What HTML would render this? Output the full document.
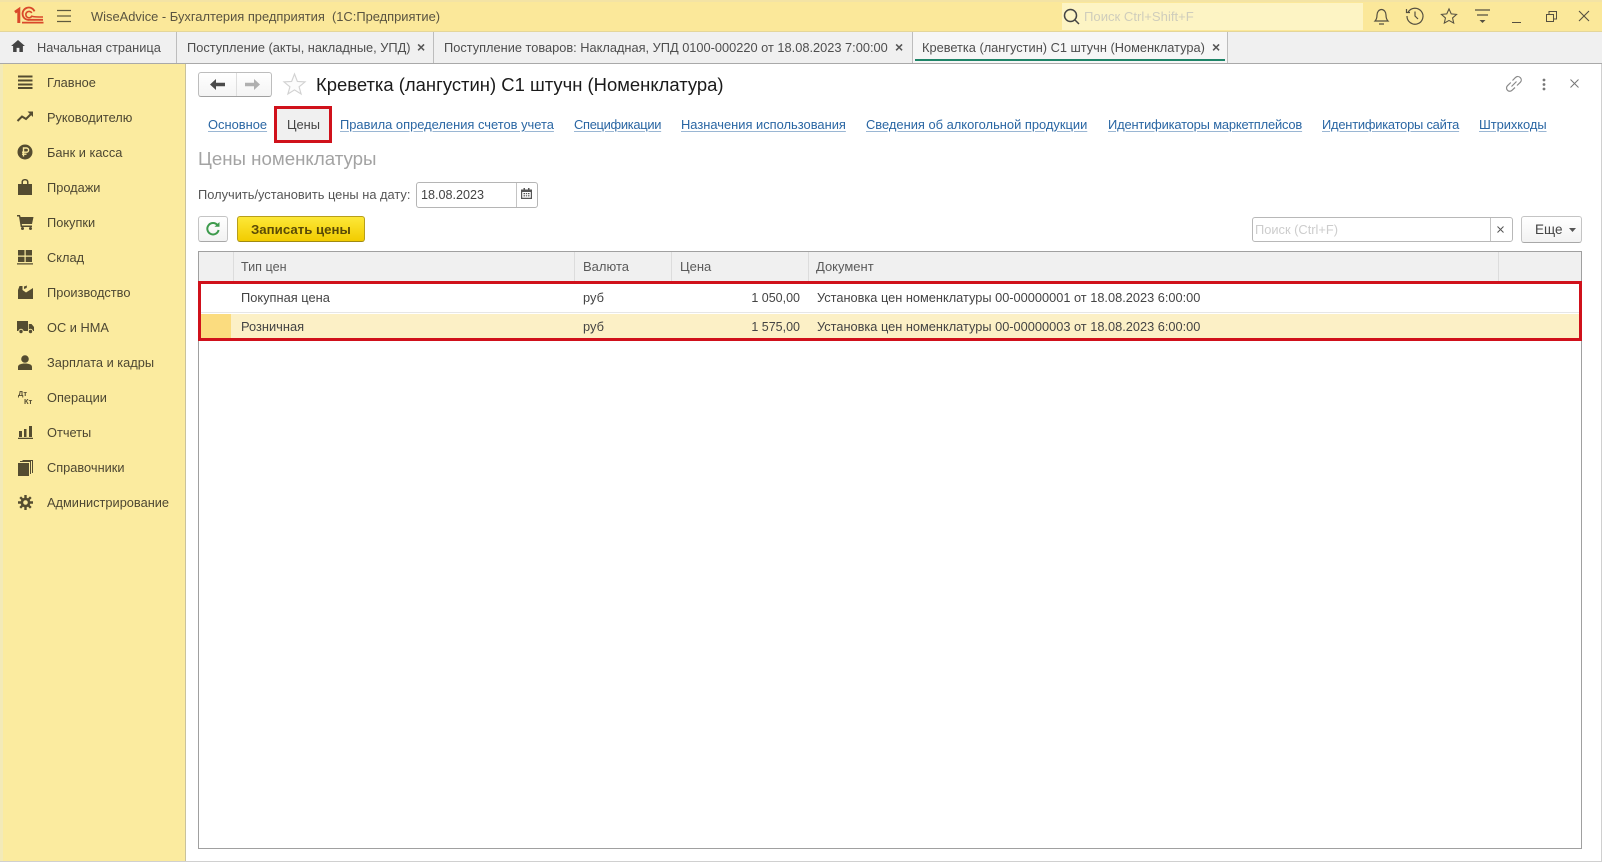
<!DOCTYPE html>
<html lang="ru"><head><meta charset="utf-8"><title>Креветка (лангустин) С1 штучн (Номенклатура)</title>
<style>
html,body{margin:0;padding:0}
body{width:1602px;height:862px;position:relative;overflow:hidden;background:#fff;font-family:"Liberation Sans",Arial,sans-serif;font-size:12.85px;color:#4a4a4a}
.a,.t{position:absolute}
.t{white-space:nowrap;line-height:16px}
svg{position:absolute;overflow:visible}
.side{color:#4d4732;left:47px;font-size:12.8px}
.l{color:#2a66a3;top:117px;font-size:12.9px;text-decoration:underline;text-decoration-color:#9ab6d3;text-underline-offset:2px}
.tab{top:40px;color:#4e4e4e;font-size:12.8px}
.x{top:39px;font-weight:bold;color:#555;font-size:14px}
.h{top:259px;color:#5a5a5a;font-size:13px}
.c{color:#444}
.sep{position:absolute;width:1px;background:#dcdcdc;top:252px;height:29px}
</style></head><body>
<!-- top bar -->
<div class="a" style="left:0;top:0;width:1602px;height:32px;background:#fbe89a;border-top:0"></div>
<div class="a" style="left:0;top:0;width:1602px;height:2px;background:#f3e3a5"></div>
<div class="a" style="left:0;top:31px;width:1602px;height:1px;background:#e4d69a"></div>
<svg style="left:14px;top:8px" width="30" height="16" viewBox="0 0 30 16" fill="none" stroke="#d9482a">
<path d="M1 4.2L4.8 1.6V15" stroke-width="3"/>
<path d="M20.5 3.4A6.2 6.2 0 1 0 16 11.8H29" stroke-width="1.8"/>
<path d="M17.8 5A3.2 3.2 0 1 0 17.8 8.2C19.5 8.8 24 9 29 9" stroke-width="1.6"/>
<path d="M8 14.6H29.5" stroke-width="1.8"/></svg>
<svg style="left:57px;top:9px" width="15" height="14" stroke="#5f5a3e" stroke-width="1.2"><path d="M0 1.5H14M0 7H14M0 12.5H14"/></svg>
<div class="t" style="left:91px;top:9px;color:#5a5440;font-size:12.9px;white-space:pre">WiseAdvice - Бухгалтерия предприятия  (1С:Предприятие)</div>
<div class="a" style="left:1062px;top:3px;width:301px;height:27px;background:#fdf4c4"></div>
<svg style="left:1063px;top:8px" width="18" height="18" fill="none" stroke="#444" stroke-width="1.5"><circle cx="7.5" cy="7.5" r="6"/><path d="M12 12L16 16"/></svg>
<div class="t" style="left:1084px;top:9px;color:#cfcdbc;font-size:13.1px">Поиск Ctrl+Shift+F</div>
<svg style="left:1372px;top:7px" width="20" height="20" fill="none" stroke="#555040" stroke-width="1.2"><path d="M3 14C5 12 5 10 5 8 5 5 7 2.5 9.5 2.5S14 5 14 8C14 10 14 12 16 14ZM7 17H12"/></svg>
<svg style="left:1405px;top:6px" width="20" height="20" fill="none" stroke="#555040" stroke-width="1.2"><path d="M3.2 6A8 8 0 1 1 2 10M1.5 3V6.5H5M10 5.5V10L13 13"/></svg>
<svg style="left:1440px;top:8px" width="18" height="16" viewBox="0 0 19 18" fill="none" stroke="#555040" stroke-width="1.2"><path d="M9.5 1L12 6.6 18 7.2 13.5 11.2 14.8 17 9.5 14 4.2 17 5.5 11.2 1 7.2 7 6.6Z"/></svg>
<svg style="left:1475px;top:9px" width="16" height="15" stroke="#555040" stroke-width="1.2"><path d="M0 1H15M2 6H13"/><path d="M4.5 11H10.5L7.5 14Z" fill="#555040" stroke="none"/></svg>
<div class="a" style="left:1512px;top:22px;width:9px;height:1px;background:#555040"></div>
<svg style="left:1546px;top:11px" width="11" height="11" fill="none" stroke="#555040"><path d="M.5 3.5H7.5V10.5H.5ZM3 3V.5H10.5V8H8"/></svg>
<svg style="left:1578px;top:10px" width="12" height="12" stroke="#555040" stroke-width="1.1"><path d="M1 1L11 11M11 1L1 11"/></svg>
<!-- tabs -->
<div class="a" style="left:0;top:32px;width:1602px;height:31px;background:#f0f0f0;border-bottom:1px solid #a9a9a9"></div>
<div class="a" style="left:176px;top:32px;width:1px;height:31px;background:#bdbdbd"></div>
<div class="a" style="left:433px;top:32px;width:1px;height:31px;background:#bdbdbd"></div>
<div class="a" style="left:912px;top:32px;width:316px;height:31px;background:#f6f6f6;border-left:1px solid #bdbdbd;border-right:1px solid #bdbdbd;box-sizing:border-box"></div>
<div class="a" style="left:915px;top:59px;width:310px;height:2px;background:#1f8468"></div>
<svg style="left:11px;top:40px" width="14" height="12" viewBox="0 0 15 13" fill="#444"><path d="M7.5 0L15 6.5H12.8V13H9V8.5H6V13H2.2V6.5H0Z"/></svg>
<div class="t tab" style="left:37px">Начальная страница</div>
<div class="t tab" style="left:187px">Поступление (акты, накладные, УПД)</div><div class="t x" style="left:417px">×</div>
<div class="t tab" style="left:444px">Поступление товаров: Накладная, УПД 0100-000220 от 18.08.2023 7:00:00</div><div class="t x" style="left:895px">×</div>
<div class="t tab" style="left:922px">Креветка (лангустин) С1 штучн (Номенклатура)</div><div class="t x" style="left:1212px">×</div>
<!-- sidebar -->
<div class="a" style="left:0;top:64px;width:185px;height:797px;background:#fbeb9f;border-right:1px solid #c9c29c"></div>
<div class="a" style="left:0;top:64px;width:3px;height:797px;background:#f3eab8"></div>
<div class="a" style="left:0;top:861px;width:1602px;height:1px;background:#d0d0d0"></div>
<div class="a" style="left:1601px;top:64px;width:1px;height:798px;background:#d0d0d0"></div>
<div class="t side" style="top:75px">Главное</div>
<div class="t side" style="top:110px">Руководителю</div>
<div class="t side" style="top:145px">Банк и касса</div>
<div class="t side" style="top:180px">Продажи</div>
<div class="t side" style="top:215px">Покупки</div>
<div class="t side" style="top:250px">Склад</div>
<div class="t side" style="top:285px">Производство</div>
<div class="t side" style="top:320px">ОС и НМА</div>
<div class="t side" style="top:355px">Зарплата и кадры</div>
<div class="t side" style="top:390px">Операции</div>
<div class="t side" style="top:425px">Отчеты</div>
<div class="t side" style="top:460px">Справочники</div>
<div class="t side" style="top:495px">Администрирование</div>
<svg style="left:18px;top:75px" width="15" height="15" stroke="#544c30" stroke-width="2"><path d="M0 1.5H14.5M0 5.5H14.5M0 9.5H14.5M0 13H14.5"/></svg>
<svg style="left:17px;top:110px" width="17" height="14" fill="none" stroke="#544c30" stroke-width="2"><path d="M0.5 11L5 6.5 9 9 15 3"/><path d="M10.5 1.5H16V7Z" fill="#544c30" stroke="none"/></svg>
<svg style="left:17px;top:144px" width="16" height="16"><circle cx="8" cy="8" r="7.5" fill="#544c30"/><path d="M6.5 12.5V4H9.5A2 2 0 0 1 9.5 8.2H5M5 10.2H9.5" fill="none" stroke="#fbeb9f" stroke-width="1.4"/></svg>
<svg style="left:18px;top:179px" width="14" height="16" fill="#544c30"><path d="M0 5H3.5V3C3.5 1 5 0 7 0S10.5 1 10.5 3V5H14V16H0ZM5 5H9V3C9 2 8 1.4 7 1.4S5 2 5 3Z"/></svg>
<svg style="left:17px;top:215px" width="17" height="15" fill="#544c30"><path d="M0 0H3L3.6 2H16.5L15 9H4.8L5 10.5H15V12H3.7L2 1.5H0Z"/><circle cx="5.5" cy="13.5" r="1.5"/><circle cx="13.5" cy="13.5" r="1.5"/></svg>
<svg style="left:17px;top:250px" width="16" height="15" fill="#544c30"><path d="M1 0H7.5V5.5H1ZM8.7 0H15V5.5H8.7ZM1 6.7H7.5V12H1ZM8.7 6.7H15V12H8.7ZM0 13.2H16V14.5H0Z"/></svg>
<svg style="left:18px;top:285px" width="15" height="15" fill="#544c30"><path d="M0 14V5L1.5 1H4.5L4.5 5 8 7.5 15 3V14Z"/><path d="M6 1.5L9 .5 8.6 3 6 4Z"/></svg>
<svg style="left:17px;top:321px" width="17" height="13" fill="#544c30"><path d="M0 0H11V10H0ZM11.8 3H14.5L17 6V10H11.8Z"/><circle cx="4" cy="10.5" r="2.2" stroke="#fbeb9f"/><circle cx="13.5" cy="10.5" r="2.2" stroke="#fbeb9f"/></svg>
<svg style="left:18px;top:355px" width="14" height="15" fill="#544c30"><circle cx="7" cy="4" r="3.8"/><path d="M0 15V12C0 9.5 3 8.5 7 8.5S14 9.5 14 12V15Z"/></svg>
<div class="t" style="left:18px;top:390px;font-size:7.5px;font-weight:bold;color:#544c30;line-height:8px">Дт<br><span style="margin-left:6px">Кт</span></div>
<svg style="left:18px;top:426px" width="15" height="13" fill="#544c30"><path d="M1 5H4V11H1ZM6 3H8.5V11H6ZM11 0H14V11H11ZM0 11.7H15V13H0Z"/></svg>
<svg style="left:18px;top:460px" width="15" height="16"><path d="M0 3H11V16H0Z" fill="#544c30"/><path d="M2 1.5H12.5V14M4.5 .5H14.5V13" fill="none" stroke="#544c30"/></svg>
<svg style="left:18px;top:495px" width="15" height="15" fill="none" stroke="#544c30"><circle cx="7.5" cy="7.5" r="3.6" stroke-width="2.6"/><path d="M7.5 0V3M7.5 12V15M0 7.5H3M12 7.5H15M2.2 2.2L4.3 4.3M10.7 10.7L12.8 12.8M12.8 2.2L10.7 4.3M4.3 10.7L2.2 12.8" stroke-width="2.4"/></svg>
<!-- header -->
<div class="a" style="left:198px;top:72px;width:72px;height:23px;border:1px solid #bdbdbd;border-bottom-color:#a0a0a0;border-radius:3px;background:linear-gradient(#fff,#f4f4f4)"></div>
<div class="a" style="left:236px;top:73px;width:1px;height:23px;background:#dedede"></div>
<svg style="left:210px;top:79px" width="15" height="11" fill="#4a4a4a"><path d="M0 5.5L6 0V3.8H15V7.2H6V11Z"/></svg>
<svg style="left:245px;top:79px" width="15" height="11" fill="#b0b0b0"><path d="M15 5.5L9 0V3.8H0V7.2H9V11Z"/></svg>
<svg style="left:283px;top:73px" width="23" height="22" viewBox="0 0 24 23" fill="#fcfcfc" stroke="#d2d2d2" stroke-width="1.2"><path d="M12 1L15 8.8 23 9.3 16.8 14.4 18.9 22 12 17.7 5.1 22 7.2 14.4 1 9.3 9 8.8Z"/></svg>
<div class="t" style="left:316px;top:74px;font-size:18.44px;line-height:22px;color:#1a1a1a">Креветка (лангустин) С1 штучн (Номенклатура)</div>
<svg style="left:1506px;top:76px" width="16" height="16" fill="none" stroke="#8a8a8a" stroke-width="1.2"><path d="M6.5 4.5L9.5 1.5C11 .2 13 .2 14.3 1.6 15.6 3 15.6 5 14.3 6.3L11 9.5M9 11.5L6 14.3C4.6 15.6 2.7 15.6 1.5 14.3.2 13 .2 11 1.5 9.7L4.8 6.5M5.5 10.5L10.5 5.5"/></svg>
<svg style="left:1542px;top:78px" width="4" height="13" fill="#777"><circle cx="2" cy="2" r="1.4"/><circle cx="2" cy="6.5" r="1.4"/><circle cx="2" cy="11" r="1.4"/></svg>
<svg style="left:1570px;top:79px" width="9" height="9" stroke="#777"><path d="M.5 .5L8.5 8.5M8.5 .5L.5 8.5"/></svg>
<!-- link bar -->
<div class="a" style="left:274px;top:106px;width:58px;height:37px;box-sizing:border-box;border:3px solid #d0111b;background:#f0f0f0"></div>
<div class="t l" style="left:208px">Основное</div>
<div class="t" style="left:287px;top:117px;color:#444">Цены</div>
<div class="t l" style="left:340px">Правила определения счетов учета</div>
<div class="t l" style="left:574px;letter-spacing:-.3px">Спецификации</div>
<div class="t l" style="left:681px">Назначения использования</div>
<div class="t l" style="left:866px">Сведения об алкогольной продукции</div>
<div class="t l" style="left:1108px;letter-spacing:-.17px">Идентификаторы маркетплейсов</div>
<div class="t l" style="left:1322px;letter-spacing:-.22px">Идентификаторы сайта</div>
<div class="t l" style="left:1479px;letter-spacing:-.05px">Штрихкоды</div>
<div class="t" style="left:198px;top:148px;font-size:18.7px;line-height:22px;color:#a3a3a3">Цены номенклатуры</div>
<div class="t" style="left:198px;top:187px;color:#555">Получить/установить цены на дату:</div>
<div class="a" style="left:416px;top:182px;width:120px;height:24px;border:1px solid #b5b5b5;border-radius:3px;background:#fff"></div>
<div class="a" style="left:516px;top:183px;width:1px;height:24px;background:#c4c4c4"></div>
<div class="t" style="left:421px;top:187px;color:#444;font-size:12.6px">18.08.2023</div>
<svg style="left:521px;top:188px" width="11" height="11" fill="#555"><path d="M0 1.5H11V11H0ZM1.2 4V9.8H9.8V4Z"/><path d="M2.5 5H4V6.2H2.5ZM4.8 5H6.2V6.2H4.8ZM7 5H8.5V6.2H7ZM2.5 7.2H4V8.4H2.5ZM4.8 7.2H6.2V8.4H4.8ZM7 7.2H8.5V8.4H7Z"/><path d="M2.5 0H4V2H2.5ZM7 0H8.5V2H7Z"/></svg>
<!-- toolbar -->
<div class="a" style="left:198px;top:216px;width:28px;height:24px;border:1px solid #c4c4c4;border-bottom-color:#a8a8a8;border-radius:3px;background:linear-gradient(#fff,#f2f2f2)"></div>
<svg style="left:206px;top:222px" width="14" height="14" fill="none" stroke="#3d9a4c" stroke-width="2"><path d="M11.5 3.2A5.7 5.7 0 1 0 12.6 8"/><path d="M8.5 4.8H13.5V0Z" fill="#3d9a4c" stroke="none"/></svg>
<div class="a" style="left:237px;top:216px;width:126px;height:24px;border:1px solid #b89f1a;border-bottom-color:#a08a10;border-radius:3px;background:linear-gradient(#fde838,#f2cc00)"></div>
<div class="t" style="left:251px;top:222px;font-weight:bold;color:#5a4a06;font-size:13.25px">Записать цены</div>
<div class="a" style="left:1252px;top:217px;width:259px;height:23px;border:1px solid #b8b8b8;border-radius:3px;background:#fff"></div>
<div class="a" style="left:1490px;top:218px;width:1px;height:23px;background:#c4c4c4"></div>
<div class="t" style="left:1255px;top:222px;color:#cdcdcd">Поиск (Ctrl+F)</div>
<svg style="left:1497px;top:226px" width="7" height="7" stroke="#555"><path d="M.5 .5L6.5 6.5M6.5 .5L.5 6.5"/></svg>
<div class="a" style="left:1521px;top:216px;width:59px;height:25px;border:1px solid #c4c4c4;border-bottom-color:#a8a8a8;border-radius:3px;background:linear-gradient(#fff,#f2f2f2)"></div>
<div class="t" style="left:1535px;top:222px;color:#444;font-size:13.5px">Еще</div>
<svg style="left:1569px;top:228px" width="7" height="4" fill="#555"><path d="M0 0H7L3.5 4Z"/></svg>
<!-- table -->
<div class="a" style="left:198px;top:251px;width:1382px;height:596px;border:1px solid #a0a0a0;background:#fff"></div>
<div class="a" style="left:199px;top:252px;width:1382px;height:29px;background:#f0f0f0"></div>
<div class="sep" style="left:233px"></div><div class="sep" style="left:574px"></div><div class="sep" style="left:671px"></div><div class="sep" style="left:808px"></div><div class="sep" style="left:1498px"></div>
<div class="t h" style="left:241px;font-size:12.6px">Тип цен</div>
<div class="t h" style="left:583px">Валюта</div>
<div class="t h" style="left:680px">Цена</div>
<div class="t h" style="left:816px">Документ</div>
<div class="a" style="left:199px;top:312px;width:1380px;height:1px;background:#e6e6e6"></div>
<div class="a" style="left:200px;top:314px;width:1379px;height:24px;background:#fcf0c6"></div>
<div class="a" style="left:200px;top:314px;width:31px;height:24px;background:#fbdc7f"></div>
<div class="t c" style="left:241px;top:290px">Покупная цена</div>
<div class="t c" style="left:583px;top:290px">руб</div>
<div class="t c" style="left:700px;top:290px;width:100px;text-align:right;font-size:12.5px">1 050,00</div>
<div class="t c" style="left:817px;top:290px;font-size:12.79px">Установка цен номенклатуры 00-00000001 от 18.08.2023 6:00:00</div>
<div class="t c" style="left:241px;top:319px">Розничная</div>
<div class="t c" style="left:583px;top:319px">руб</div>
<div class="t c" style="left:700px;top:319px;width:100px;text-align:right;font-size:12.5px">1 575,00</div>
<div class="t c" style="left:817px;top:319px;font-size:12.79px">Установка цен номенклатуры 00-00000003 от 18.08.2023 6:00:00</div>
<div class="a" style="left:198px;top:281px;width:1384px;height:60px;box-sizing:border-box;border:3px solid #d0111b"></div>
</body></html>
